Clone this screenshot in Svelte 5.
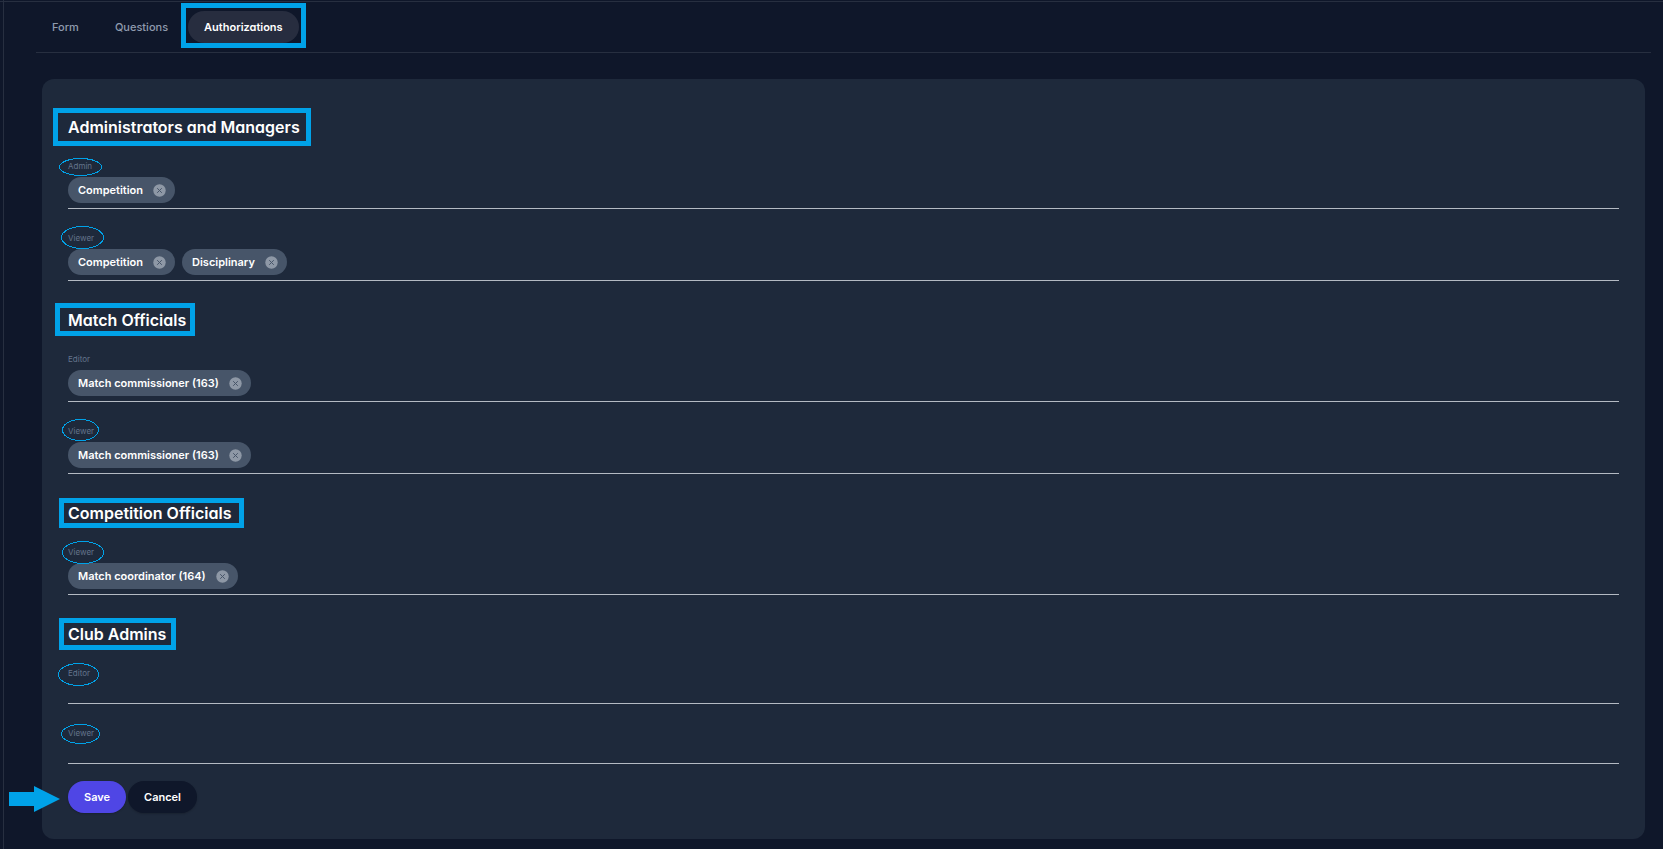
<script>
    let groups = $state([
        {
            title: "Administrators and Managers",
            fields: [
                { label: "Admin", values: ["Competition"] },
                { label: "Viewer", values: ["Competition", "Disciplinary"] },
            ],
        },
        {
            title: "Match Officials",
            fields: [
                { label: "Editor", values: ["Match commissioner (163)"] },
                { label: "Viewer", values: ["Match commissioner (163)"] },
            ],
        },
        {
            title: "Competition Officials",
            fields: [{ label: "Viewer", values: ["Match coordinator (164)"] }],
        },
        {
            title: "Club Admins",
            fields: [
                { label: "Editor", values: [] },
                { label: "Viewer", values: [] },
            ],
        },
    ]);

    const tabs = ["Form", "Questions", "Authorizations"];
    let activeTab = $state("Authorizations");

    function removeValue(field, index) {
        field.values.splice(index, 1);
    }
</script>

<div class="page">
    <nav class="tabs">
        {#each tabs as tab}
            <button type="button" class="tab" class:active={tab === activeTab} onclick={() => (activeTab = tab)}>
                {tab}
            </button>
        {/each}
    </nav>

    <form class="card" onsubmit={(e) => e.preventDefault()}>
        {#each groups as group, g}
            <section>
                <h2>{group.title}</h2>
                {#each group.fields as field, f}
                    <div class="field">
                        <label for="field-{g}-{f}">{field.label}</label>
                        <div class="values">
                            {#each field.values as value, i}
                                <span class="chip">
                                    {value}
                                    <button type="button" class="remove" aria-label="Remove {value}" onclick={() => removeValue(field, i)}>
                                        <svg viewBox="0 0 13 13" width="13" height="13">
                                            <circle cx="6.5" cy="6.5" r="6.2" fill="#8e98a6" />
                                            <path d="M4.2 4.2l4.6 4.6M8.8 4.2l-4.6 4.6" stroke="#475569" stroke-width="1" />
                                        </svg>
                                    </button>
                                </span>
                            {/each}
                            <input id="field-{g}-{f}" type="text" />
                        </div>
                    </div>
                {/each}
            </section>
        {/each}

        <div class="actions">
            <button type="submit" class="btn save">Save</button>
            <button type="button" class="btn cancel">Cancel</button>
        </div>
    </form>

    <!-- guide marks -->
    <svg class="marks" width="320" height="849" viewBox="0 0 320 849" aria-hidden="true">
        <g fill="none" stroke="#00a2e8" stroke-width="5">
            <rect x="183.5" y="5.5" width="120" height="40" />
            <rect x="55.5" y="110.5" width="253" height="33" />
            <rect x="57.5" y="305.5" width="135" height="28" />
            <rect x="61.5" y="500.5" width="180" height="25" />
            <rect x="61.5" y="620.5" width="112" height="27" />
        </g>
        <g fill="none" stroke="#00a2e8" shape-rendering="crispEdges">
            <ellipse cx="80.5" cy="167" rx="21" ry="8.5" />
            <ellipse cx="82.5" cy="237.5" rx="21" ry="11" />
            <ellipse cx="80.5" cy="430" rx="18" ry="10.5" />
            <ellipse cx="83" cy="552.5" rx="20.5" ry="11" />
            <ellipse cx="78.5" cy="674.5" rx="20" ry="11" />
            <ellipse cx="80.5" cy="734" rx="19" ry="9.5" />
        </g>
        <path d="M9 792h25v-6l26 13-26 13v-6H9z" fill="#00a2e8" />
    </svg>
</div>

<style>
    :global(body) {
        margin: 0;
        background: #0f172a;
    }
    .page {
        position: relative;
        box-sizing: border-box;
        min-height: 100vh;
        margin-left: 3px;
        padding: 9px 12px 10px 32px;
        border-left: 1px solid #272f40;
        font-family: Inter, "Liberation Sans", sans-serif;
        color: #fff;
    }
    .page::before {
        content: "";
        position: absolute;
        top: 1px;
        left: -4px;
        right: 0;
        height: 1px;
        background: #272f40;
    }
    button {
        border: 0;
        font: inherit;
        cursor: pointer;
    }
    .tabs {
        display: flex;
        gap: 4px;
        padding: 2px 0 9px;
        border-bottom: 1px solid #272f40;
    }
    .tab {
        height: 32px;
        padding: 0 16px;
        border-radius: 16px;
        background: none;
        color: #8f9bae;
        font-size: 11px;
        font-weight: 500;
        font-feature-settings: "cv11";
    }
    .tab.active {
        background: #272d3f;
        color: #fff;
        font-weight: 600;
    }
    .card {
        margin: 26px 6px 0;
        padding: 38px 26px 26px;
        border-radius: 12px;
        background: #1e293b;
    }
    section + section {
        margin-top: 29px;
    }
    h2 {
        margin: 0;
        font-size: 16px;
        font-weight: 600;
        line-height: 20px;
        font-feature-settings: "cv11";
    }
    .field {
        padding: 21px 0 5px;
        border-bottom: 1px solid #b4bac3;
    }
    label {
        display: block;
        margin-bottom: 3px;
        color: #64748b;
        font-size: 8px;
        line-height: 16px;
    }
    .values {
        display: flex;
        flex-wrap: wrap;
        gap: 7px;
    }
    .chip {
        display: flex;
        align-items: center;
        gap: 10px;
        height: 26px;
        padding: 0 9px 0 10px;
        border-radius: 13px;
        background: #475569;
        font-size: 11px;
        font-weight: 600;
    }
    .remove {
        display: flex;
        padding: 0;
        background: none;
    }
    .values input {
        flex: 1;
        min-width: 40px;
        height: 14px;
        padding: 0;
        border: 0;
        outline: 0;
        background: none;
        color: inherit;
        font: inherit;
        font-size: 11px;
    }
    .actions {
        display: flex;
        gap: 2px;
        margin-top: 17px;
    }
    .btn {
        height: 32px;
        padding: 0 16px;
        border-radius: 16px;
        color: #fff;
        font-size: 11px;
        font-weight: 600;
        box-shadow: 0 1px 2px rgba(0, 0, 0, 0.2);
    }
    .save {
        background: #4f46e5;
    }
    .cancel {
        background: #0f172a;
    }
    .marks {
        position: absolute;
        top: 0;
        left: -4px;
        pointer-events: none;
    }
</style>
